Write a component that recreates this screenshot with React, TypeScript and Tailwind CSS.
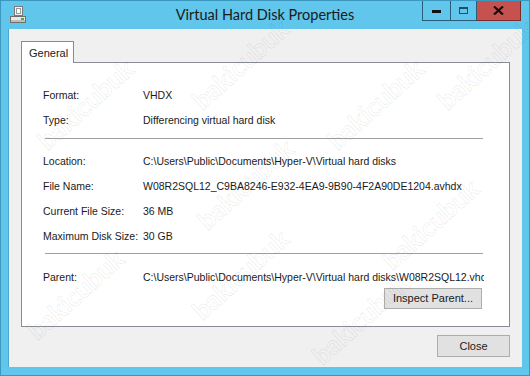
import React from "react";

const font = { fontFamily: "'Liberation Sans', Arial, sans-serif" };
const titleFont = { fontFamily: "Lato, 'Noto Sans', sans-serif" };

function Row({ label, value, clip }: { label: string; value: string; clip?: boolean }) {
  return (
    <div className="flex h-[25px] items-center">
      <div className="w-[100px] shrink-0 whitespace-nowrap">{label}</div>
      <div className={clip ? "w-[341px] overflow-hidden whitespace-nowrap" : "whitespace-nowrap"}>{value}</div>
    </div>
  );
}

function Sep() {
  return <div className="ml-[2px] h-px w-[438px] bg-[#a0a0a0]" />;
}

const marks: Array<[number, number]> = [
  [90, 100],
  [245, 60],
  [380, 100],
  [490, 60],
  [250, 180],
  [435, 220],
  [80, 290],
  [245, 270],
  [365, 315],
];

export default function App() {
  return (
    <div
      className="relative flex h-[376px] w-[530px] flex-col overflow-hidden border border-[#3c97bf] bg-[#60c6eb] text-[10.5px] text-[#1a1a1a]"
      style={font}
    >
      {/* Title bar */}
      <div className="relative flex h-[28px] shrink-0 items-center">
        <div className="ml-[7px] flex h-[20px] w-[20px] items-center justify-center">
          <svg width="18" height="18" viewBox="0 0 18 18">
            <rect x="5.5" y="0.5" width="8" height="9" fill="#f4f4f4" stroke="#7a7a7a" />
            <rect x="7.5" y="2.5" width="4" height="5" fill="#ffffff" stroke="#9a9a9a" />
            <rect x="1.5" y="10.5" width="15" height="6" fill="#e8e8e8" stroke="#6f6f6f" />
            <rect x="2" y="14" width="14" height="2" fill="#bdbdbd" />
            <rect x="12" y="12" width="3" height="2" fill="#3fae3f" />
          </svg>
        </div>
        <div
          className="absolute left-0 right-0 top-[3px] text-center text-[14.5px] text-[#1a1a1a]"
          style={titleFont}
        >
          Virtual Hard Disk Properties
        </div>
        <div className="absolute right-[8px] top-[-1px] flex h-[21px]">
          <div className="flex w-[29px] items-center justify-center border border-t-0 border-[#2a5d78] bg-[#60c6eb]">
            <div className="mt-[2px] h-[3px] w-[9px] bg-[#111]" />
          </div>
          <div className="flex w-[26px] items-center justify-center border border-l-0 border-t-0 border-[#2a5d78] bg-[#60c6eb]">
            <div className="h-[7px] w-[9px] border border-t-2 border-[#1f4e66]" />
          </div>
          <div className="flex w-[44px] items-center justify-center border border-l-0 border-t-0 border-[#7d2a2a] bg-[#c7514f]">
            <svg width="11" height="9" viewBox="0 0 11 9">
              <path d="M1 0.5 L10 8.5 M10 0.5 L1 8.5" stroke="#111" strokeWidth="2.2" />
            </svg>
          </div>
        </div>
      </div>

      {/* Client area */}
      <div className="mx-[7px] flex h-[338px] shrink-0 flex-col border-l border-[#4aa8cf] bg-[#f0f0f0] pl-[12px] pr-[12px] pt-[12px]">
        {/* Tab */}
        <div className="flex">
          <div className="relative z-10 mb-[-1px] flex h-[22px] w-[53px] items-center border border-b-0 border-[#898c95] bg-white pl-[7px] pt-[1px] text-[11px]">
            General
          </div>
        </div>
        {/* Panel */}
        <div className="flex h-[265px] w-[489px] flex-col border border-[#898c95] bg-white pl-[21px] pt-[20px]">
          <Row label="Format:" value="VHDX" />
          <Row label="Type:" value="Differencing virtual hard disk" />
          <div className="mt-[5px]" />
          <Sep />
          <div className="mt-[10px]" />
          <Row label="Location:" value="C:\Users\Public\Documents\Hyper-V\Virtual hard disks" />
          <Row label="File Name:" value="W08R2SQL12_C9BA8246-E932-4EA9-9B90-4F2A90DE1204.avhdx" />
          <Row label="Current File Size:" value="36 MB" />
          <Row label="Maximum Disk Size:" value="30 GB" />
          <div className="mt-[4px]" />
          <Sep />
          <div className="mt-[11px]" />
          <Row
            label="Parent:"
            value="C:\Users\Public\Documents\Hyper-V\Virtual hard disks\W08R2SQL12.vhdx"
            clip
          />
          <div className="mr-[27px] mt-[-2px] flex justify-end">
            <button className="flex h-[21px] w-[98px] items-center justify-center border border-[#adadad] bg-[#e1e1e1] text-[11px]">
              Inspect Parent...
            </button>
          </div>
        </div>
        <div className="mt-[8px] flex w-[489px] justify-end">
          <button className="flex h-[22px] w-[73px] items-center justify-center border border-[#adadad] bg-[#e1e1e1] text-[11px]">
            Close
          </button>
        </div>
      </div>

      {/* Watermarks */}
      {marks.map(([x, y], i) => (
        <div
          key={i}
          className="pointer-events-none absolute text-[26px] font-bold text-transparent"
          style={{
            left: x - 65,
            top: y - 16,
            transform: "rotate(-42deg)",
            WebkitTextStroke: "1px rgba(0,0,0,0.07)",
            ...titleFont,
          }}
        >
          bakicubuk
        </div>
      ))}
    </div>
  );
}
